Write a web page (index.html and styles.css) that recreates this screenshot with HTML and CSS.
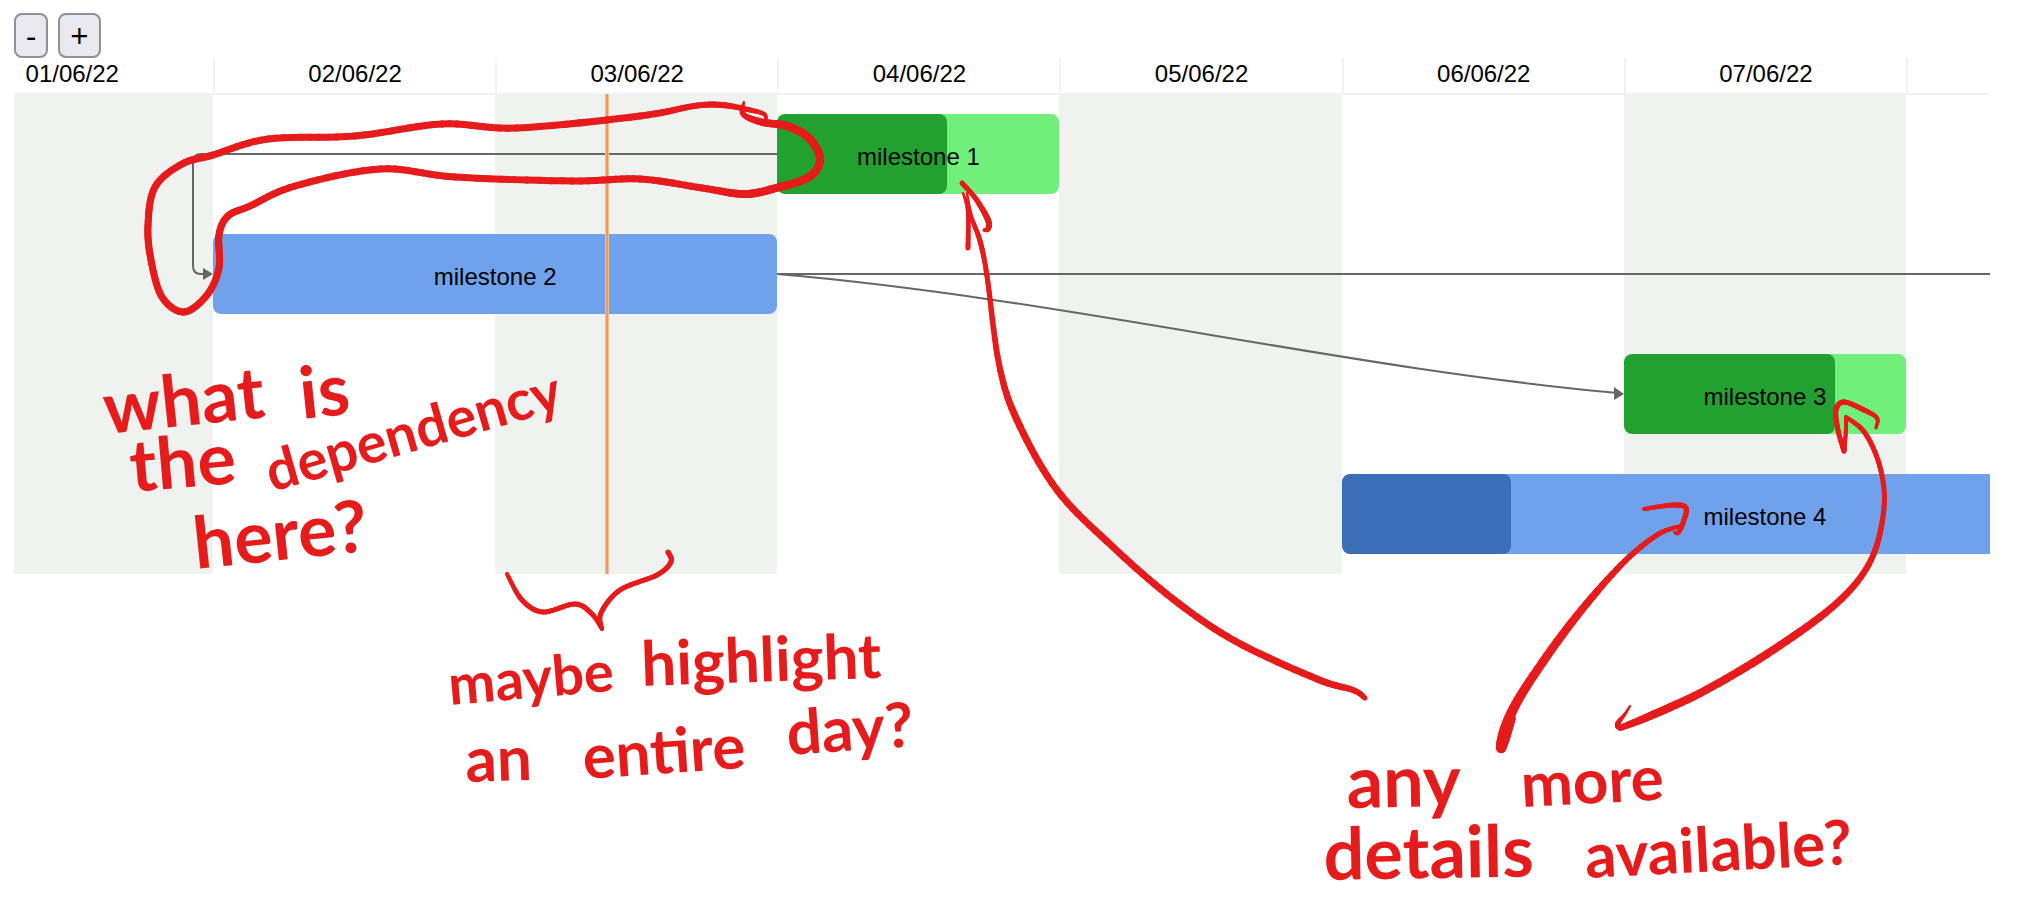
FILE: index.html
```html
<!DOCTYPE html>
<html lang="en">
<head>
<meta charset="utf-8">
<title>Milestones</title>
<link rel="stylesheet" href="styles.css">
</head>
<body>
<main class="page">
  <div class="zoom-controls">
    <button type="button" class="zoom-button" aria-label="Zoom out">-</button>
    <button type="button" class="zoom-button" aria-label="Zoom in">+</button>
  </div>
  <section class="chart">
    <div class="days header">
      <div class="date date-first">01/06/22</div>
      <div class="date">02/06/22</div>
      <div class="date">03/06/22</div>
      <div class="date">04/06/22</div>
      <div class="date">05/06/22</div>
      <div class="date">06/06/22</div>
      <div class="date">07/06/22</div>
      <div class="date"></div>
    </div>
    <div class="plot">
      <div class="days stripes">
        <div class="stripe"></div><div></div><div class="stripe"></div><div></div>
        <div class="stripe"></div><div></div><div class="stripe"></div><div></div>
      </div>
      <svg class="links" viewBox="0 0 1976 480" preserveAspectRatio="none" aria-hidden="true">
        <path class="link" d="M763 60H187Q179 60 179 68V172Q179 180 187 180H190"/>
        <path class="link" d="M763 180H1976"/>
        <path class="link" d="M763 180C1045 204 1328 274 1604 299"/>
        <path class="arrow" d="M189 174L199 180L189 186ZM1600 293L1610 300L1600 306Z"/>
      </svg>
      <div class="rows">
        <div class="days row"><div class="bar green in-04"><span class="done" style="width:60%"></span><span class="label">milestone 1</span></div></div>
        <div class="days row"><div class="bar blue in-02-03"><span class="label">milestone 2</span></div></div>
        <div class="days row"><div class="bar green in-07"><span class="done" style="width:75%"></span><span class="label">milestone 3</span></div></div>
        <div class="days row"><div class="bar blue in-06-08"><span class="done" style="width:20%"></span><span class="label">milestone 4</span></div></div>
      </div>
      <div class="now"></div>
    </div>
  </section>
  <svg class="notes" viewBox="0 0 2034 897">
    <g id="strokes"></g>
    <text class="large" transform="translate(106 434) rotate(-6)">what</text>
    <text class="large" transform="translate(302 419) rotate(-6)">is</text>
    <text class="large" transform="translate(132 492) rotate(-5)">the</text>
    <text class="small" transform="translate(272 492) rotate(-16)">dependency</text>
    <text class="large" transform="translate(196 569) rotate(-6)">here?</text>
    <text class="small" transform="translate(450 705) rotate(-5)">maybe</text>
    <text class="medium" transform="translate(642 686) rotate(-2)">highlight</text>
    <text class="medium" transform="translate(466 782) rotate(-2)">an</text>
    <text class="medium" transform="translate(584 779) rotate(-4)">entire</text>
    <text class="medium" transform="translate(788 755) rotate(-4)">day?</text>
    <text class="large" transform="translate(1347 808) rotate(-1)">any</text>
    <text class="medium" transform="translate(1522 807) rotate(-3)">more</text>
    <text class="large" transform="translate(1324 880) rotate(-1)">details</text>
    <text class="medium" transform="translate(1586 878) rotate(-3)">available?</text>
  </svg>
</main>
<script src="strokes.js"></script>
</body>
</html>
```
FILE: styles.css
```css
body {
  margin: 0;
  background: #fff;
  color: #000;
  font-family: "Liberation Sans", Arial, sans-serif;
  font-size: 24px;
}

.page {
  position: relative;
  box-sizing: border-box;
  min-height: 100vh;
  padding: 13px 44px 0 14px;
  overflow: hidden;
}

.zoom-controls {
  display: flex;
  gap: 10px;
}

.zoom-button {
  box-sizing: border-box;
  height: 45px;
  padding: 0 10px;
  border: 2px solid #8f8f9d;
  border-radius: 8px;
  background: #e9e9ed;
  color: #000;
  font: 32px/40px "Open Sans", "Noto Sans", sans-serif;
}

.chart {
  overflow: hidden;
}

.days {
  display: grid;
  grid-template-columns: 10.07% repeat(7, 14.28%);
}

.header {
  height: 35px;
  border-bottom: 2px solid #f0f2ef;
}

.date {
  box-sizing: border-box;
  border-left: 2px solid #f0f2ef;
  line-height: 31px;
  text-align: center;
}

.date-first {
  padding-right: 94px;
  border-left: 0;
  text-align: right;
}

.plot {
  position: relative;
  margin-top: -1px;
}

.stripes {
  position: absolute;
  inset: 0;
}

.stripe {
  background: #f0f2ef;
}

.links {
  position: absolute;
  inset: 0;
  width: 100%;
  height: 100%;
}

.link {
  fill: none;
  stroke: #666;
  stroke-width: 2;
}

.arrow {
  fill: #666;
}

.rows {
  position: relative;
}

.row {
  padding: 20px 0;
}

.bar {
  position: relative;
  display: flex;
  align-items: center;
  justify-content: center;
  height: 80px;
  border-radius: 8px;
  overflow: hidden;
}

.green { background: #70ef7d; }
.blue { background: #70a1eb; }
.in-04 { grid-column: 4; }
.in-02-03 { grid-column: 2 / span 2; }
.in-07 { grid-column: 7; }
.in-06-08 { grid-column: 6 / span 3; }

.done {
  position: absolute;
  inset: 0 auto 0 0;
  border-radius: 8px;
}

.green .done { background: #23a130; }
.blue .done { background: #3c6eb8; }

.label {
  position: relative;
  padding-top: 6px;
}

.now {
  position: absolute;
  top: 0;
  bottom: 0;
  left: 29.9%;
  box-sizing: border-box;
  width: 4px;
  border: solid #f3bd92;
  border-width: 0 1px;
  background: #ee985a;
}

.notes {
  position: absolute;
  top: 0;
  left: 0;
  width: 100%;
  fill: #e61b1b;
  font-family: Lato, sans-serif;
  font-weight: 700;
  pointer-events: none;
}

.large { font-size: 72px; }
.medium { font-size: 62px; }
.small { font-size: 56px; }
```
FILE: strokes.js
```js
// Pen strokes: each point is [x, y, pen width].
const strokes = [
  [[744,102,2],[743,114,5],[761,122,7],[787,126,8],[809,138,8],[820,159,8],[809,177,8],[776,188,8],[744,194,8],[702,188,7],[640,179,7],[572,181,7],[455,177,7],[380,169,7],[295,186,7],[250,206,7],[228,216,7],[219,235,7],[219,268,7],[207,295,7],[184,312,7],[162,297,7],[151,260,7],[148,225,7],[155,187,7],[182,164,7],[213,155,7],[268,139,7],[355,136,7],[442,124,7],[517,128,7],[640,116,7],[694,106,6],[722,105,6],[750,110,5],[764,114,4],[766,120,3]],
  [[962,183,5],[976,199,5],[988,220,6],[988,229,5],[984,230,3]],
  [[963,193,2],[968,212,4],[968,248,5]],
  [[967,193,2],[971,216,4],[980,241,5],[987,276,5],[999,364,6],[1017,420,7],[1057,490,7],[1113,547,7],[1173,599,7],[1235,641,7],[1317,679,7],[1353,690,6],[1365,698,5]],
  [[507,574,4],[522,600,5],[543,612,5],[575,604,5],[592,614,5],[602,629,4]],
  [[602,629,4],[601,613,5],[620,590,5],[657,575,5],[671,562,5],[668,552,5]],
  [[1644,509,4],[1673,505,5],[1686,508,5],[1683,523,5],[1678,533,4],[1674,532,2]],
  [[1681,526,4],[1657,535,5],[1621,565,6],[1572,622,8],[1526,687,9],[1507,723,10],[1501,748,10],[1508,737,5],[1515,718,2]],
  [[1876,428,3],[1877,418,4],[1864,410,5],[1844,402,5],[1836,410,5],[1838,430,5],[1844,451,5]],
  [[1844,451,5],[1846,430,4],[1846,417,4]],
  [[1846,417,4],[1865,433,5],[1880,467,5],[1884,508,5],[1871,560,6],[1837,603,7],[1773,650,8],[1706,690,8],[1650,716,8],[1620,728,6]],
  [[1618,727,5],[1618,723,5],[1625,714,3],[1630,706,2]]
];

const spline = (a, b, c, d, t) =>
  0.5 * (2 * b + (c - a) * t + (2 * a - 5 * b + 4 * c - d) * t * t + (3 * b - a - 3 * c + d) * t * t * t);

const group = document.getElementById("strokes");

strokes.forEach((points) => {
  const samples = [];
  for (let i = 0; i < points.length - 1; i++) {
    const set = [points[Math.max(i - 1, 0)], points[i], points[i + 1], points[Math.min(i + 2, points.length - 1)]];
    for (let s = 0; s < 10; s++) {
      samples.push([0, 1, 2].map((k) => spline(set[0][k], set[1][k], set[2][k], set[3][k], s / 10)));
    }
  }
  samples.push(points[points.length - 1]);
  for (let i = 1; i < samples.length; i++) {
    const [x1, y1] = samples[i - 1];
    const [x2, y2, width] = samples[i];
    const line = document.createElementNS("http://www.w3.org/2000/svg", "path");
    line.setAttribute("d", `M${x1} ${y1}L${x2} ${y2}`);
    line.setAttribute("stroke", "#e61b1b");
    line.setAttribute("stroke-linecap", "round");
    line.setAttribute("stroke-width", width);
    group.appendChild(line);
  }
});
```
